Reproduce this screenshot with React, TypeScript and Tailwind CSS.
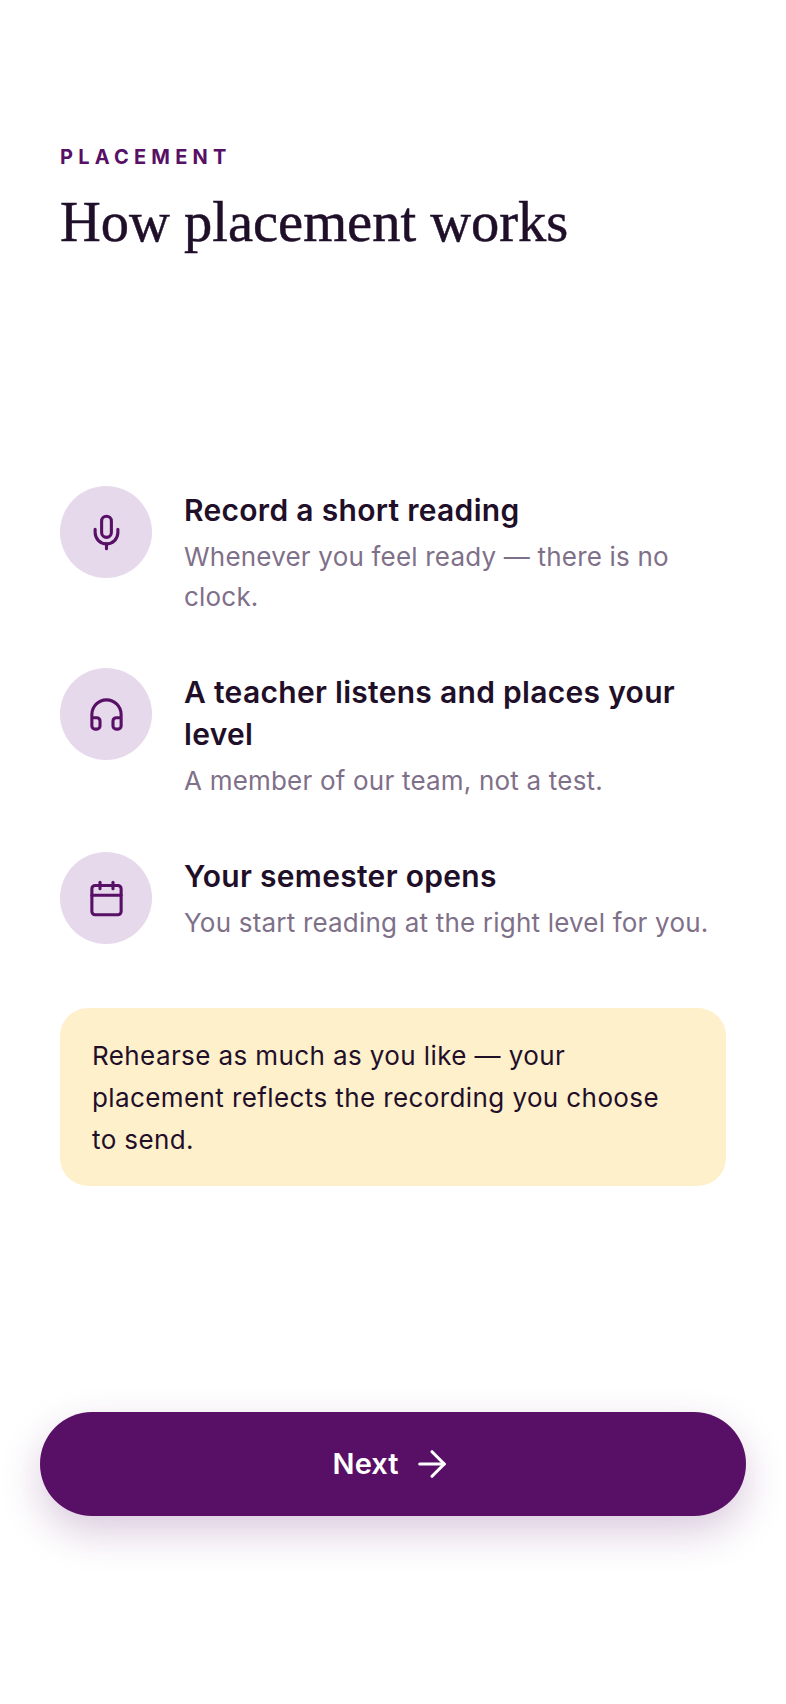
import { ArrowRight, Calendar, Headphones, Mic } from 'lucide-react';

const STEPS = [
  { icon: Mic, title: 'Record a short reading', body: 'Whenever you feel ready — there is no clock.' },
  { icon: Headphones, title: 'A teacher listens and places your level', body: 'A member of our team, not a test.' },
  { icon: Calendar, title: 'Your semester opens', body: 'You start reading at the right level for you.' },
];

export default function App() {
  return (
    <div className="relative h-[1704px] w-full bg-white font-['Inter',sans-serif] text-[#1f0f29]">
      <div className="px-[60px] pt-[143px]">
        {/* Header */}
        <div className="text-[20px] leading-[28px] font-bold tracking-[5.2px] text-[#580f66]">PLACEMENT</div>
        <h1 className="mt-[19px] font-['Liberation_Serif',serif] text-[56.5px] leading-[64px] font-normal [-webkit-text-stroke:0.5px_#1f0f29]">
          How placement works
        </h1>

        {/* Steps */}
        <div className="mt-[232px] flex flex-col gap-[51px]">
          {STEPS.map((step) => {
            const Icon = step.icon;
            return (
              <div key={step.title} className="flex gap-[32px]">
                <div className="flex h-[92px] w-[92px] shrink-0 items-center justify-center rounded-full bg-[#e6d9eb]">
                  <Icon size={39} strokeWidth={1.9} className="text-[#580f66]" />
                </div>
                <div className="min-w-0 flex-1 pt-[3px]">
                  <div className="text-[30px] leading-[42px] font-[570] tracking-[0.3px]">{step.title}</div>
                  <div className="mt-[6px] text-[26px] leading-[40px] tracking-[0.2px] text-[#7f7089]">{step.body}</div>
                </div>
              </div>
            );
          })}
        </div>

        {/* Note */}
        <div className="mt-[64px] rounded-[28px] bg-[#fff0cc] pt-[27px] pr-[46px] pb-[25px] pl-[32px] text-[26px] leading-[42px] tracking-[0.4px]">
          Rehearse as much as you like — your placement reflects the recording you choose to send.
        </div>
      </div>

      {/* Next button */}
      <div className="absolute top-[1412px] right-[40px] left-[40px]">
        <button className="flex h-[104px] w-full items-center justify-center gap-[13px] rounded-full bg-[#580f66] text-[29px] font-semibold text-white shadow-[0_16px_40px_rgba(88,15,102,0.22)]">
          Next
          <ArrowRight size={42} strokeWidth={1.8} />
        </button>
      </div>
    </div>
  );
}
